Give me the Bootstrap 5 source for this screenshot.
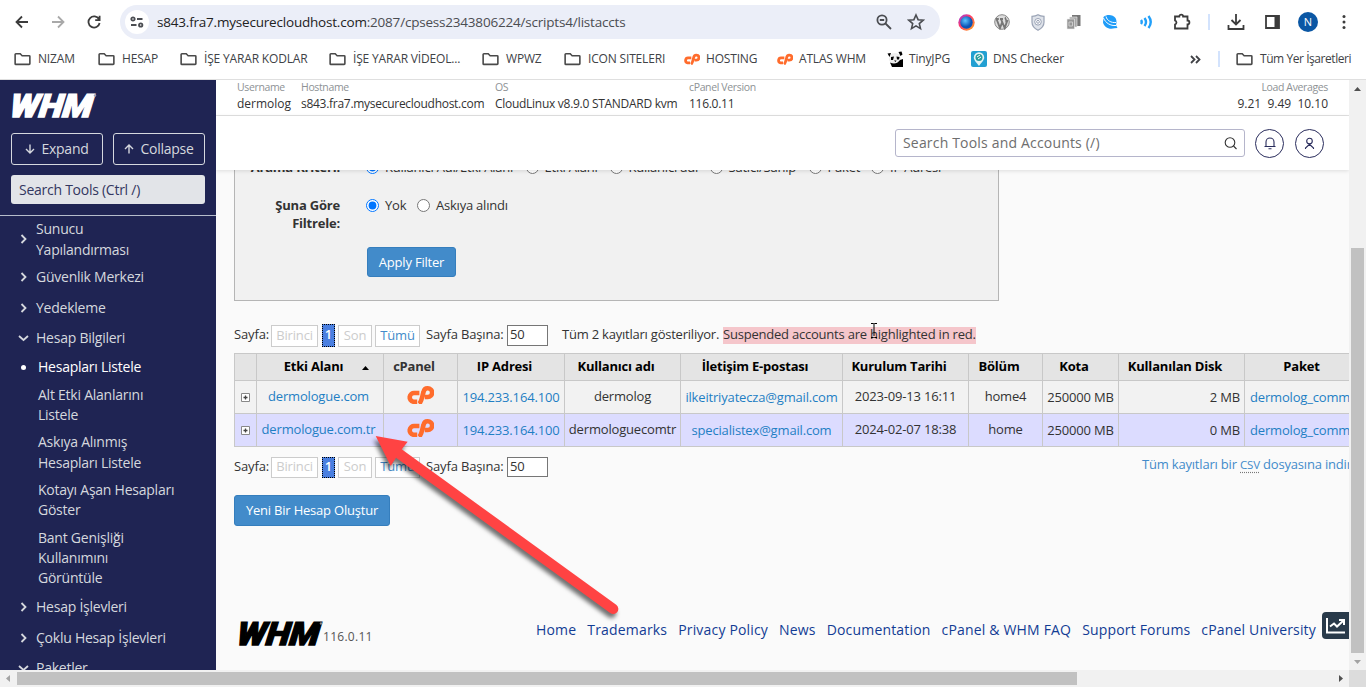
<!DOCTYPE html>
<html lang="tr">
<head>
<meta charset="utf-8">
<title>WHM - Hesapları Listele</title>
<link href="https://cdn.jsdelivr.net/npm/bootstrap@5.3.0/dist/css/bootstrap.min.css" rel="stylesheet">
<script src="https://cdn.jsdelivr.net/npm/bootstrap@5.3.0/dist/js/bootstrap.bundle.min.js"></script>
<style>
body{font:13px/20px "Open Sans","Noto Sans",sans-serif;color:#333;width:1366px;height:687px;overflow:hidden;background:#fff}
a{text-decoration:none}
svg{display:block;flex:none}
.stroke{fill:none;stroke:currentColor;stroke-width:1.8}
.thin{stroke-width:1.4}
.fine{stroke-width:1.1}
.toolbar{height:44px;padding-left:4px;color:#3c3c3c}
.cell{width:36px;height:36px;flex:none;display:grid;place-items:center}
.omni{width:820px;height:34px;margin:0 8px;background:#ebeef8;border-radius:17px;padding-left:5px;font-size:13.5px;letter-spacing:-.2px;color:#4b4d52}
.omni .site{width:24px;height:24px;border-radius:50%;background:#fff;margin-right:8px;display:grid;place-items:center}
.omni b{font-weight:400;color:#222}
.sep{width:2px;height:16px;background:#d3e3fd}
.marks{display:grid;grid-template-columns:84px 82px 149px 153px 82px 120px 93px 110px 84px 219px 29px 18px auto;height:35px;padding:0 0 5px 13px;font-size:12px;letter-spacing:-.17px;color:#404246;align-items:center;white-space:nowrap}
.marks>div{display:flex;align-items:center;padding-left:1px}
.marks svg{margin-right:7px}
.marks .fav{margin-right:6px}
.marks .all{letter-spacing:-.44px}
.bline{height:1px;background:#dfdfdf}
.side{width:216px;background:#1f2453;color:#d5d8de;font-size:14px;letter-spacing:-.24px;overflow:hidden}
.side-top{height:136px;padding:13px 11px 0;border-bottom:1px solid #b5bccb}
.sbtn{width:92px;height:32px;border:1px solid #d5d8de;border-radius:3px;letter-spacing:-.25px;padding-bottom:1px}
.sbtn svg{margin-right:6px}
.ssearch{height:29px;background:#e2e4e8;border-radius:3px;color:#33375f;margin-top:10px;padding:0 8px;line-height:29px;letter-spacing:-.26px}
.top-item{display:flex;align-items:center;height:20px;margin-bottom:10.6px;padding-left:18px}
.top-item svg{margin-right:7px}
.sub{padding:0 30px 0 38px;line-height:20.1px;margin-bottom:7.5px}
.sub.on{color:#fff;position:relative}
.sub.on:before{content:"";position:absolute;left:21px;top:8px;width:5px;height:5px;border-radius:50%;background:#fff}
.main-col{width:1133px;background:#fafafa;overflow:hidden}
.info{height:36px;border-bottom:1px solid #e2e2e2;background:#fff;display:grid;grid-template-columns:64px 194px 194px 1fr auto;padding:0 21px 0 21px;white-space:nowrap;font-size:12px;line-height:17px}
.info small{display:block;font-size:10.5px;color:#8e9295;line-height:15px;letter-spacing:-.36px}
.tight{letter-spacing:-.28px}
.hdr{height:54px;background:#fff;box-shadow:0 1px 4px rgba(0,0,0,.12);position:relative;z-index:2;padding-right:25px}
.hsearch{width:350px;height:28px;border:1px solid #b5b5cb;border-radius:3px;font-size:14px;color:#6e6e6e;padding:0 7px;letter-spacing:.18px}
.circ{width:29px;height:29px;border:1px solid #292c5c;border-radius:50%;color:#292c5c;display:grid;place-items:center}
.view{height:500px;overflow:hidden;padding-left:18px;letter-spacing:-.15px}
.filter{width:765px;height:151px;margin-top:-20px;border:1px solid #b5b5b5;background:#f1f1f1}
.filter .lab{width:105px;text-align:right;font-weight:700;line-height:18px;letter-spacing:-.2px;margin-right:27px}
.opt{display:flex;align-items:center;line-height:18px;white-space:nowrap;letter-spacing:-.22px}
.opt input{margin:1px 6px 0 -1px;width:13px;height:13px}
.opts{display:grid;grid-template-columns:159.5px 84px 100px 99px 62.5px auto}
.opts2{display:grid;grid-template-columns:51px auto}
.blue{background:#428bca;border:1px solid #357ebd;color:#fff;border-radius:3px;font-size:13px;padding:0;height:31px;line-height:29px;display:block;letter-spacing:-.21px}
.blue:hover{background:#3071a9;color:#fff}
.pager{display:grid;grid-template-columns:37px 51px 16px 37px 51px 81px 55px 161px auto;height:22px;align-items:center;white-space:nowrap}
.pager>.pb{border:1px solid #ccc;height:22px;line-height:18px;text-align:center;color:#ccc;background:#fff}
.pager>.cur{width:13px;height:23px;line-height:19px;background:#4a7fe0;border:1px dotted #000;color:#fff;text-align:center;font-weight:600}
.pager>.num{width:41px;height:21px;border:1.5px solid #767676;background:#fff;padding-left:2px;line-height:17px}
.pager>.txt{line-height:18px;padding-bottom:3px}
.pager>.red{background:#f5c6cb;width:253px;height:17px;line-height:14px;letter-spacing:-.215px}
.pager.low>.pb{height:21px;line-height:17px}
.pager.low>.cur{height:21px;line-height:17px}
.pager.low>.num{height:20px;line-height:16px}
.accts{table-layout:fixed;width:1125px;border-collapse:collapse;margin:7px 0 9px;white-space:nowrap;letter-spacing:-.17px}
.accts th,.accts td{border:1px solid #c8c8c8;padding:0 0 2px;text-align:center;height:33px;overflow:hidden}
.accts th{height:27px;background:#e4e4e4;color:#000;font-size:13px;letter-spacing:-.2px}
.accts th.sortable{padding-right:13px}
.accts tr.a td{background:#f2f2f2}.accts tr.b td{background:#dcdcff}
.accts a,.csv{color:#1f7fc4}
.accts svg{margin:auto}
.accts td.lo{padding-bottom:0}
.accts td.dom{padding-right:3px}
.accts td.num-cell{padding-right:4px}
.accts td.pack{padding-left:5px}
.foot{height:28px;margin-top:93px}
.foot .links{display:flex;gap:11px;font-size:14px;letter-spacing:.175px;white-space:nowrap}
.foot a{color:#123c94}
.stat{width:27px;height:27px;background:#293a4a;border-radius:4px 0 0 4px;display:grid;place-items:center}
.vbar{width:17px;background:#f1f1f1}
.thumb{background:#c1c1c1}
.hbar{height:17px;background:#f1f1f1}
.wordmark{overflow:visible}
.wordmark text{font-family:"Roboto",sans-serif;font-weight:900;font-style:italic;font-size:32px}
.arrow-over{position:absolute;left:360px;top:420px;pointer-events:none;z-index:5;filter:drop-shadow(-2px 4px 2px rgba(0,0,0,.55))}
.ibeam{position:absolute;left:870px;top:323px;z-index:5}
</style>
</head>
<body>
<svg width="0" height="0" class="position-absolute">
<symbol id="fold" viewBox="0 0 18 14"><path d="M2 1.5h4.6l2 2H16a.8.8 0 0 1 .8.8v7.6a.8.8 0 0 1-.8.8H2a.8.8 0 0 1-.8-.8V2.3a.8.8 0 0 1 .8-.8z" fill="none" stroke="#4a4a4a" stroke-width="1.7"/></symbol>
<symbol id="cp" viewBox="0 0 27 18"><g fill="none" stroke="#ff6c2c" stroke-width="4.6"><path d="M12.400 7H7.400a4.400 4.400 0 0 0-1.200 8.700h4"/><path d="M12 17.900C14.500 16 14.800 12 16.500 6q.9-3.700 3.900-3.700h.4a4.300 4.300 0 0 1 0 8.700h-3"/></g></symbol>
<symbol id="cr" viewBox="0 0 11 10"><path d="M3.5 1l4 4-4 4" class="stroke"/></symbol>
<symbol id="cd" viewBox="0 0 11 10"><path d="M1 3l4.5 4L10 3" class="stroke"/></symbol>
</svg>

<div class="toolbar d-flex align-items-center">
 <div class="cell"><svg width="14" height="14" class="stroke"><path d="M13 7H2M7 1.5 1.5 7 7 12.5"/></svg></div>
 <div class="cell" style="color:#a9a9a9"><svg width="14" height="14" class="stroke"><path d="M1 7h11M7 1.5 12.5 7 7 12.5"/></svg></div>
 <div class="cell"><svg width="14" height="14" class="stroke"><path d="M12 4.2A5.6 5.6 0 1 0 12.6 8M12.6.8v4.4H8.2"/></svg></div>
 <div class="omni d-flex align-items-center">
  <div class="site"><svg width="14" height="12" class="stroke"><circle cx="3" cy="3" r="1.7"/><path d="M7 3h5.500M1 9h5.500"/><circle cx="10.700" cy="9" r="1.700"/></svg></div>
  <div><b>s843.fra7.mysecurecloudhost.com</b>:2087/cpsess2343806224/scripts4/listaccts</div>
  <svg width="16" height="16" class="stroke ms-auto"><circle cx="6" cy="6" r="4.600"/><path d="M9.500 9.500 15 15M3.800 6h4.400"/></svg>
  <svg width="18" height="18" viewBox="0 0 18 18" class="stroke" style="margin:0 15px 0 15px"><path stroke-width="1.600" d="M9 2l2.100 4.700 5.100.5-3.900 3.400 1.200 5L9 12.900l-4.500 2.700 1.200-5L1.800 7.200l5.100-.5z"/></svg>
 </div>
 <div class="cell"><svg width="17" height="17"><defs><linearGradient id="gg" x2="1" y2="1"><stop stop-color="#8b3df0"/><stop offset=".4" stop-color="#ff3868"/><stop offset="1" stop-color="#ffb01c"/></linearGradient><radialGradient id="gb" cx=".4" cy=".35"><stop stop-color="#5ec4ff"/><stop offset="1" stop-color="#0b53b5"/></radialGradient></defs><circle cx="8.500" cy="8.500" r="8.200" fill="url(#gg)"/><circle cx="8.500" cy="8.500" r="6.200" fill="url(#gb)"/></svg></div>
 <div class="cell"><svg width="16" height="16"><circle cx="8" cy="8" r="7.300" fill="#ddd" stroke="#888"/><path d="M2.500 5l3.500 9 2.200-6-1.200-3M7 5l3.700 9L13.500 6M1.800 5h3M6 5h3" fill="none" stroke="#777" stroke-width="1.900"/><path d="M12 3.500c-2 1 1.500 2.500 0 5" fill="none" stroke="#777" stroke-width="1.700"/></svg></div>
 <div class="cell"><svg width="14" height="17"><path d="M7 .8c2 1.300 4 1.500 6 1.500v6c0 4-3 6.500-6 8-3-1.500-6-4-6-8v-6c2 0 4-.2 6-1.500z" fill="#dfe3ea" stroke="#9aa3b5" stroke-width="1.200"/><circle cx="7" cy="7.800" r="3.300" fill="#fff" stroke="#98a1b4"/><circle cx="7" cy="7.800" r="1.400" fill="none" stroke="#98a1b4"/></svg></div>
 <div class="cell"><svg width="16" height="16"><path d="M6 1h8.500v11H6z" fill="#777"/><path d="M3.500 3H11v10H3.500z" fill="#a5a5a5" stroke="#eee" stroke-width=".6"/><path d="M1 5h7.500v10H1z" fill="#969696" stroke="#eee" stroke-width=".6"/><path d="M3 8h3.500v4H3z" fill="none" stroke="#ccc"/></svg></div>
 <div class="cell"><svg width="16" height="16"><path d="M1.500 3C5 0 11 .5 13.500 4c1.500 2.500 1 5.500.5 7l1.500 3-3 .3C7 16 2 13 1 8.500z" fill="#1f9cf8"/><path d="M1.500 4c2 5 7 8 12.500 7.500M4 2.500c1 4 5 6.500 10 6" fill="none" stroke="#fff"/></svg></div>
 <div class="cell"><svg width="15" height="14" style="color:#22a0fa" class="stroke"><g stroke-width="2.400"><path d="M2 5q1.500 2 0 4M5.500 3q3 4 0 8M9.500 1q4.500 6 0 12"/></g></svg></div>
 <div class="cell"><svg width="18" height="18" class="stroke"><path d="M2 3.500h4.300a1.900 1.900 0 0 1 3.800 0h4.400v4a1.900 1.900 0 0 1 0 3.800v4.200H2v-4a2.100 2.100 0 0 0 0-4z"/></svg></div>
 <div class="d-flex justify-content-center" style="width:18px"><i class="sep"></i></div>
 <div class="cell"><svg width="18" height="18" class="stroke"><path d="M9 1v10M4.500 7 9 11.500 13.500 7M1.500 12v4h15v-4"/></svg></div>
 <div class="cell"><svg width="15" height="14"><path d="M1 1h13v12H1z" class="stroke"/><path d="M9.500 1H14v12H9.500z" fill="currentColor"/></svg></div>
 <div class="cell"><span class="rounded-circle text-white text-center" style="width:20px;height:20px;background:#0b57a4;font-size:11px">N</span></div>
 <div class="cell"><svg width="4" height="16" fill="currentColor"><circle cx="2" cy="2.500" r="1.500"/><circle cx="2" cy="8" r="1.500"/><circle cx="2" cy="13.500" r="1.500"/></svg></div>
</div>
<div class="marks">
 <div><svg width="17" height="14"><use href="#fold"/></svg>NIZAM</div>
 <div><svg width="17" height="14"><use href="#fold"/></svg>HESAP</div>
 <div><svg width="17" height="14"><use href="#fold"/></svg>İŞE YARAR KODLAR</div>
 <div><svg width="17" height="14"><use href="#fold"/></svg>İŞE YARAR VİDEOL...</div>
 <div><svg width="17" height="14"><use href="#fold"/></svg>WPWZ</div>
 <div><svg width="17" height="14"><use href="#fold"/></svg>ICON SITELERI</div>
 <div><svg class="fav" width="16" height="12"><use href="#cp"/></svg>HOSTING</div>
 <div><svg class="fav" width="16" height="12"><use href="#cp"/></svg>ATLAS WHM</div>
 <div><svg class="fav" width="16" height="16"><path d="M3 4q5-4 10 0l1 6-1 3-5 1-4-2-2-3z" fill="#eee"/><path d="M.5 2.500 4 2 2.500 6zM11.500 1l3-.5 1 3-2 1.500zM4 6l3-.5L6 9H4zM9.500 5.500l3 .5-.5 2.500h-2zM7 9.500h2.500l-1 1.500zM3 11.500q6 3 10-2.500l3-1v8H5z"/></svg>TinyJPG</div>
 <div><svg class="fav" width="16" height="16"><rect width="16" height="16" rx="2" fill="#22a0d2"/><path d="M8 15C5 11 2.800 9 2.800 6.500a5.200 5.200 0 0 1 10.400 0C13.200 9 11 11 8 15z" fill="#e5f4f5"/><circle cx="8" cy="6.500" r="3.500" fill="#2b9d9c"/><path d="M6 6l3-2M7 8l3-2" stroke="#fff"/></svg>DNS Checker</div>
 <div><svg width="11" height="9" class="stroke m-0"><path d="M1 1l3.500 3.500L1 8M6 1l3.500 3.500L6 8"/></svg></div>
 <div class="p-0"><i class="sep"></i></div>
 <div class="all p-0"><svg width="17" height="14"><use href="#fold"/></svg>Tüm Yer İşaretleri</div>
</div>
<div class="bline"></div>

<div class="d-flex" style="height:590px">
 <aside class="side flex-shrink-0">
  <div class="side-top">
   <svg class="wordmark" width="86" height="25"><text x="0" y="24" textLength="82" lengthAdjust="spacingAndGlyphs" fill="#fff" stroke="#fff" stroke-width="1.300" transform="translate(1 0) skewX(-7)">WHM</text><circle cx="84" cy="2.500" r="1.200" fill="#9b9db5"/></svg>
   <div class="d-flex" style="gap:10px;margin-top:15px">
    <div class="sbtn d-flex align-items-center justify-content-center"><svg width="10" height="10" class="stroke thin"><path d="M5 .5v8.300M1 5 5 9l4-4"/></svg>Expand</div>
    <div class="sbtn d-flex align-items-center justify-content-center"><svg width="10" height="10" class="stroke thin"><path d="M5 9.500V1.200M1 5l4-4 4 4"/></svg>Collapse</div>
   </div>
   <div class="ssearch">Search Tools (Ctrl /)</div>
  </div>
  <nav style="padding-top:2px">
   <div class="top-item" style="height:42px;line-height:21px;margin-bottom:7px"><svg width="11" height="10"><use href="#cr"/></svg>Sunucu<br>Yapılandırması</div>
   <div class="top-item"><svg width="11" height="10"><use href="#cr"/></svg>Güvenlik Merkezi</div>
   <div class="top-item"><svg width="11" height="10"><use href="#cr"/></svg>Yedekleme</div>
   <div class="top-item" style="margin-bottom:9px"><svg width="11" height="10"><use href="#cd"/></svg>Hesap Bilgileri</div>
   <div class="sub on">Hesapları Listele</div>
   <div class="sub">Alt Etki Alanlarını<br>Listele</div>
   <div class="sub">Askıya Alınmış<br>Hesapları Listele</div>
   <div class="sub">Kotayı Aşan Hesapları<br>Göster</div>
   <div class="sub" style="margin-bottom:9px">Bant Genişliği<br>Kullanımını<br>Görüntüle</div>
   <div class="top-item"><svg width="11" height="10"><use href="#cr"/></svg>Hesap İşlevleri</div>
   <div class="top-item"><svg width="11" height="10"><use href="#cr"/></svg>Çoklu Hesap İşlevleri</div>
   <div class="top-item"><svg width="11" height="10"><use href="#cd"/></svg>Paketler</div>
  </nav>
 </aside>
 <main class="main-col flex-shrink-0">
  <div class="info">
   <div><small>Username</small>dermolog</div>
   <div class="tight"><small>Hostname</small>s843.fra7.mysecurecloudhost.com</div>
   <div class="tight"><small>OS</small>CloudLinux v8.9.0 STANDARD kvm</div>
   <div class="tight"><small>cPanel Version</small>116.0.11</div>
   <div class="text-end"><small>Load Averages</small>9.21&nbsp; 9.49&nbsp; 10.10</div>
  </div>
  <div class="hdr d-flex align-items-center justify-content-end">
   <div class="hsearch d-flex align-items-center justify-content-between">Search Tools and Accounts (/)<svg width="13" height="13" class="stroke fine" style="color:#333"><circle cx="6" cy="5.500" r="4.800"/><path d="M9.500 9 12.500 12"/></svg></div>
   <div class="circ" style="margin:0 11px 0 10px"><svg width="12" height="13" class="stroke fine"><path d="M.5 9.500h11M2 9.500V5a4 4 0 0 1 8 0v4.500M4.500 11.800h3"/></svg></div>
   <div class="circ"><svg width="11" height="13" class="stroke fine"><circle cx="5.500" cy="4" r="2.800"/><path d="M1.500 12V11l4-3.700 4 3.700v1"/></svg></div>
  </div>
  <div class="view">
   <div class="filter">
    <div class="d-flex" style="padding-top:7px;height:45px"><div class="lab">Arama Kriteri:</div>
     <div class="opts align-items-start">
      <label class="opt"><input type="radio" name="k" checked>Kullanıcı Adı/Etki Alanı</label><label class="opt"><input type="radio" name="k">Etki Alanı</label><label class="opt"><input type="radio" name="k">Kullanıcı adı</label><label class="opt"><input type="radio" name="k">Satıcı/Sahip</label><label class="opt"><input type="radio" name="k">Paket</label><label class="opt"><input type="radio" name="k">IP Adresi</label>
     </div></div>
    <div class="d-flex" style="height:51px"><div class="lab">Şuna Göre<br>Filtrele:</div>
     <div class="opts2 align-items-start"><label class="opt"><input type="radio" name="f" checked>Yok</label><label class="opt"><input type="radio" name="f">Askıya alındı</label></div></div>
    <button class="btn blue" style="width:89px;margin-left:132px;height:30px;line-height:26px">Apply Filter</button>
   </div>
   <div class="pager" style="margin-top:23px"><span class="txt">Sayfa:</span><span class="pb" style="width:47px">Birinci</span><span class="cur">1</span><span class="pb" style="width:34px">Son</span><span class="pb" style="width:45px;color:#428bca">Tümü</span><span class="txt">Sayfa Başına:</span><span class="num">50</span><span class="txt" style="letter-spacing:-.22px">Tüm 2 kayıtları gösteriliyor.</span><span class="red">Suspended accounts are highlighted in red.</span></div>
   <table class="accts">
    <colgroup><col style="width:22px"><col style="width:127px"><col style="width:74px"><col style="width:107px"><col style="width:116px"><col style="width:162px"><col style="width:126px"><col style="width:74px"><col style="width:76px"><col style="width:126px"><col></colgroup>
    <tr><th></th><th style="padding-left:13px">Etki Alanı<svg class="d-inline" style="margin-left:19px" width="7" height="5"><path d="M0 5h7L3.500 1z"/></svg></th><th class="sortable" style="color:#333">cPanel</th><th class="sortable">IP Adresi</th><th class="sortable">Kullanıcı adı</th><th class="sortable">İletişim E-postası</th><th class="sortable">Kurulum Tarihi</th><th class="sortable">Bölüm</th><th class="sortable">Kota</th><th class="sortable">Kullanılan Disk</th><th>Paket</th></tr>
    <tr class="a"><td class="lo"><svg width="9" height="9"><path d="M.5.5h8v8h-8z" fill="#fff" stroke="#888"/><path d="M4.500 2.500v4M2.500 4.500h4" stroke="#444" stroke-width="1.300"/></svg></td><td class="dom"><a href="#">dermologue.com</a></td><td><svg width="27" height="18" style="margin-bottom:3px"><use href="#cp"/></svg></td><td class="lo"><a href="#">194.233.164.100</a></td><td>dermolog</td><td class="lo"><a href="#">ilkeitriyatecza@gmail.com</a></td><td>2023-09-13 16:11</td><td>home4</td><td class="lo">250000 MB</td><td class="lo text-end num-cell">2 MB</td><td class="lo text-start pack"><a href="#">dermolog_commerce</a></td></tr>
    <tr class="b"><td class="lo"><svg width="9" height="9"><path d="M.5.5h8v8h-8z" fill="#fff" stroke="#888"/><path d="M4.500 2.500v4M2.500 4.500h4" stroke="#444" stroke-width="1.300"/></svg></td><td class="dom"><a href="#">dermologue.com.tr</a></td><td><svg width="27" height="18" style="margin-bottom:3px"><use href="#cp"/></svg></td><td class="lo"><a href="#">194.233.164.100</a></td><td>dermologuecomtr</td><td class="lo"><a href="#">specialistex@gmail.com</a></td><td>2024-02-07 18:38</td><td>home</td><td class="lo">250000 MB</td><td class="lo text-end num-cell">0 MB</td><td class="lo text-start pack"><a href="#">dermolog_commerce</a></td></tr>
   </table>
   <div class="d-flex"><div class="pager low flex-shrink-0" style="width:908px"><span class="txt">Sayfa:</span><span class="pb" style="width:47px">Birinci</span><span class="cur">1</span><span class="pb" style="width:34px">Son</span><span class="pb" style="width:45px;color:#428bca">Tümü</span><span class="txt">Sayfa Başına:</span><span class="num">50</span></div>
    <a href="#" class="csv text-nowrap flex-shrink-0" style="color:#428bca;margin-top:-2px;letter-spacing:-.19px">Tüm kayıtları bir <abbr style="font-size:11.500px;text-decoration:underline dotted #777;text-underline-offset:3px">CSV</abbr> dosyasına indirin</a></div>
   <button class="btn blue" style="width:156px;margin-top:17px">Yeni Bir Hesap Oluştur</button>
   <div class="foot d-flex align-items-center">
    <svg class="wordmark" width="86" height="25" style="margin:0 0 0 3px"><text x="0" y="24" textLength="82" lengthAdjust="spacingAndGlyphs" stroke="#000" stroke-width="1.300" transform="translate(2 0) skewX(-7)">WHM</text><circle cx="84" cy="2.500" r="1.200" fill="#888"/></svg>
    <span style="width:213px;font-size:12px;margin-top:8px;color:#555;letter-spacing:.28px">116.0.11</span>
    <div class="links" style="margin-top:-7px"><a href="#">Home</a><a href="#">Trademarks</a><a href="#">Privacy Policy</a><a href="#">News</a><a href="#">Documentation</a><a href="#">cPanel &amp; WHM FAQ</a><a href="#">Support Forums</a><a href="#">cPanel University</a></div>
    <div class="stat ms-auto" style="margin-top:-16px"><svg width="20" height="17" class="stroke" style="color:#fff;stroke-width:2"><path d="M1 1v14.500h18M4 9.500l4-3 3 3L17 4M13 3h5v5"/></svg></div>
   </div>
  </div>
 </main>
 <div class="vbar d-flex flex-column align-items-center">
  <svg width="17" height="17"><path d="M5 11h7L8.500 7z" fill="#505050"/></svg>
  <div class="thumb" style="width:13px;height:405px;margin-top:151px"></div>
  <svg width="17" height="17"><path d="M5 7h7L8.500 11z" fill="#a3a3a3"/></svg>
 </div>
</div>
<div class="hbar d-flex align-items-center">
 <svg width="17" height="17"><path d="M10 5v7L6 8.500z" fill="#a3a3a3"/></svg>
 <div class="thumb" style="width:1060px;height:13px"></div>
 <svg width="17" height="17" style="margin-left:255px"><path d="M7 5v7l4-3.500z" fill="#505050"/></svg>
 <div class="ms-auto h-100" style="width:17px;background:#dcdcdc"></div>
</div>
<svg class="arrow-over" width="280" height="210" viewBox="360 420 280 210"><path d="M375.700 436l32 5.700-6 7.600L616.200 604.800a5.100 5.100 0 0 1-6 8.300L396 457.700l-5.300 8.300z" fill="#ff4343"/></svg>
<svg class="ibeam" width="8" height="16" stroke="#000" fill="none"><path d="M1 .5h2.500l.5.500.500-.5H7M4 1v12M1 14.500h2.500L4 14l.5.500H7"/></svg>
</body>
</html>
